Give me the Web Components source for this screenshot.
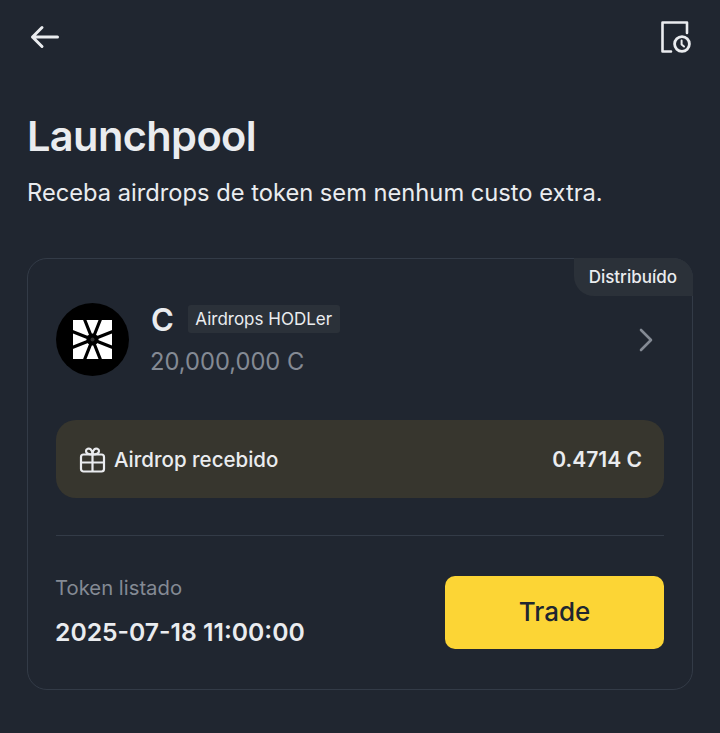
<!DOCTYPE html>
<html lang="pt">
<head>
<meta charset="utf-8">
<title>Launchpool</title>
<style>
  html, body { margin: 0; background: #202630; }
  body { font-family: "Inter", "Liberation Sans", sans-serif; color: #eaecef; }
</style>
</head>
<body>
<launch-page></launch-page>
<script>
// top bar with back arrow and history icon
class TopBar extends HTMLElement {
  constructor() {
    super();
    this.attachShadow({ mode: 'open' });
    this.shadowRoot.innerHTML = `
      <style>
        :host { display: flex; justify-content: space-between; align-items: flex-start; padding: 20px 28px 0 28px; height: 53px; }
        svg { display: block; fill: none; stroke: #eaecef; }
      </style>
      <svg width="36" height="34" viewBox="0 0 36 34" stroke-width="3" stroke-linecap="round" stroke-linejoin="round">
        <path d="M4.5 17 H29.5 M14 7.5 L4.5 17 L14 26.5" />
      </svg>
      <svg width="36" height="36" viewBox="0 0 36 36" style="margin-right:-1px">
        <path d="M30 13 V2.5 H5.5 V31.5 H14" stroke-width="2.6" stroke-linejoin="round" stroke-linecap="round"/>
        <circle cx="25" cy="24" r="7.4" stroke-width="2.8"/>
        <path d="M24.6 20.5 V24.5 L27 26.5" stroke-width="2" stroke-linecap="round" stroke-linejoin="round"/>
      </svg>`;
  }
}
customElements.define('top-bar', TopBar);

class PageHeading extends HTMLElement {
  constructor() {
    super();
    this.attachShadow({ mode: 'open' });
    this.shadowRoot.innerHTML = `
      <style>
        :host { display: block; padding: 0 28px 0 27px; }
        h1 { margin: 0; font-size: 41.5px; line-height: 48px; font-weight: 600; letter-spacing: -0.6px; color: #eaecef; padding-top: 39px; }
        p { margin: 15px 0 0 0; font-size: 23.7px; line-height: 36px; color: #eaecef; }
      </style>
      <h1><slot name="title"></slot></h1>
      <p><slot name="sub"></slot></p>`;
  }
}
customElements.define('page-heading', PageHeading);

class StatusTag extends HTMLElement {
  constructor() {
    super();
    this.attachShadow({ mode: 'open' });
    this.shadowRoot.innerHTML = `
      <style>
        :host { position: absolute; top: -1px; right: -1px; display: block; background: #2b3139; color: #eaecef;
          font-size: 17px; font-weight: 500; line-height: 38px; height: 38px; padding: 0 16px 0 15px; border-radius: 0 20px 0 20px; }
      </style>
      <slot></slot>`;
  }
}
customElements.define('status-tag', StatusTag);

class TokenLogo extends HTMLElement {
  constructor() {
    super();
    this.attachShadow({ mode: 'open' });
    this.shadowRoot.innerHTML = `
      <style>
        :host { display: block; width: 73px; height: 73px; flex: none; }
        svg { display: block; }
      </style>
      <svg width="73" height="73" viewBox="0 0 73 73">
        <circle cx="36.5" cy="36.5" r="36.5" fill="#000"/>
        <rect x="17" y="17" width="39" height="39" fill="#fff"/>
        <path stroke="#000" stroke-width="3.2" fill="none" d="M36.5 36.5 L28 15 M36.5 36.5 L45 15 M36.5 36.5 L28 58 M36.5 36.5 L45 58
          M36.5 36.5 L15 28 M36.5 36.5 L15 45 M36.5 36.5 L58 28 M36.5 36.5 L58 45"/>
        <circle cx="36.5" cy="36.5" r="6" fill="#000"/>
        <circle cx="36.5" cy="36.5" r="2" fill="#333"/>
      </svg>`;
  }
}
customElements.define('token-logo', TokenLogo);

class TokenRow extends HTMLElement {
  constructor() {
    super();
    this.attachShadow({ mode: 'open' });
    this.shadowRoot.innerHTML = `
      <style>
        :host { display: flex; align-items: center; gap: 22px; }
        .info { flex: 1; margin-bottom: -1px; }
        .name { display: flex; align-items: center; gap: 14px; height: 32px; margin-top: 1px; }
        b { font-size: 31px; font-weight: 600; color: #eaecef; }
        .badge { background: #2b3139; border-radius: 3px; font-size: 17px; line-height: 28px; padding: 0 7.5px; color: #eaecef; }
        .amount { font-size: 23.7px; line-height: 32px; color: #848a94; margin-top: 11px; margin-left: -1px; }
        svg { display: block; margin-right: 8px; }
      </style>
      <token-logo></token-logo>
      <div class="info">
        <div class="name"><b><slot name="symbol"></slot></b><span class="badge"><slot name="badge"></slot></span></div>
        <div class="amount"><slot name="amount"></slot></div>
      </div>
      <svg width="20" height="26" viewBox="0 0 20 26" fill="none" stroke="#848a94" stroke-width="2.6" stroke-linecap="round" stroke-linejoin="round">
        <path d="M5 3 L15 13 L5 23"/>
      </svg>`;
  }
}
customElements.define('token-row', TokenRow);

class AirdropBox extends HTMLElement {
  constructor() {
    super();
    this.attachShadow({ mode: 'open' });
    this.shadowRoot.innerHTML = `
      <style>
        :host { display: flex; align-items: center; height: 78px; margin-top: 43px; padding: 0 22px; border-radius: 20px; background: #37362e; color: #eaecef; font-size: 20.5px; font-weight: 500; }
        svg { display: block; margin: 0 7px 0 1px; }
        .label { flex: 1; }
        .val { font-weight: 600; font-size: 21px; }
      </style>
      <svg width="28" height="28" viewBox="0 0 28 28" fill="none" stroke="#eaecef" stroke-width="2.2" stroke-linejoin="round">
        <rect x="2" y="9.5" width="23" height="17" rx="2.5"/>
        <path d="M2 17.5 H25 M13.5 9.5 V26.5"/>
        <path d="M13.5 9.5 C9.5 9.5 7 8.5 7 6 C7 3.8 10 3 11.5 4.2 C13 5.4 13.5 7.5 13.5 9.5 C13.5 7.5 14 5.4 15.5 4.2 C17 3 20 3.8 20 6 C20 8.5 17.5 9.5 13.5 9.5 Z"/>
      </svg>
      <span class="label"><slot name="label"></slot></span>
      <span class="val"><slot name="value"></slot></span>`;
  }
}
customElements.define('airdrop-box', AirdropBox);

class ListingRow extends HTMLElement {
  constructor() {
    super();
    this.attachShadow({ mode: 'open' });
    this.shadowRoot.innerHTML = `
      <style>
        :host { display: flex; align-items: center; justify-content: space-between; margin-top: 37px; padding-top: 40px; border-top: 1px solid #333b47; }
        .text { margin-left: -1px; }
        .lbl { font-size: 20.3px; line-height: 22px; color: #848a94; }
        .date { font-size: 24.7px; line-height: 32px; font-weight: 600; color: #eaecef; margin-top: 17px; }
        button { width: 219px; height: 73px; border: 0; border-radius: 10px; padding: 0 0 2px 0; background: #fcd535; color: #202630; font: 500 26px "Inter", "Liberation Sans", sans-serif; cursor: pointer; }
      </style>
      <div class="text">
        <div class="lbl"><slot name="label"></slot></div>
        <div class="date"><slot name="date"></slot></div>
      </div>
      <button><slot name="action"></slot></button>`;
  }
}
customElements.define('listing-row', ListingRow);

class PoolCard extends HTMLElement {
  constructor() {
    super();
    this.attachShadow({ mode: 'open' });
    this.shadowRoot.innerHTML = `
      <style>
        :host { display: block; position: relative; box-sizing: border-box; margin: 47px 27px 0 27px; height: 432px; padding: 43px 28px 0 28px; border: 1px solid #333b47; border-radius: 20px; }
      </style>
      <slot></slot>`;
  }
}
customElements.define('pool-card', PoolCard);

class LaunchPage extends HTMLElement {
  constructor() {
    super();
    this.attachShadow({ mode: 'open' });
    this.shadowRoot.innerHTML = `
      <style>
        :host { display: block; width: 720px; height: 733px; overflow: hidden; }
      </style>
      <top-bar></top-bar>
      <page-heading>
        <span slot="title">Launchpool</span>
        <span slot="sub">Receba airdrops de token sem nenhum custo extra.</span>
      </page-heading>
      <pool-card>
        <status-tag>Distribuído</status-tag>
        <token-row>
          <span slot="symbol">C</span>
          <span slot="badge">Airdrops HODLer</span>
          <span slot="amount">20,000,000 C</span>
        </token-row>
        <airdrop-box>
          <span slot="label">Airdrop recebido</span>
          <span slot="value">0.4714 C</span>
        </airdrop-box>
        <listing-row>
          <span slot="label">Token listado</span>
          <span slot="date">2025-07-18 11:00:00</span>
          <span slot="action">Trade</span>
        </listing-row>
      </pool-card>`;
  }
}
customElements.define('launch-page', LaunchPage);
</script>
</body>
</html>
